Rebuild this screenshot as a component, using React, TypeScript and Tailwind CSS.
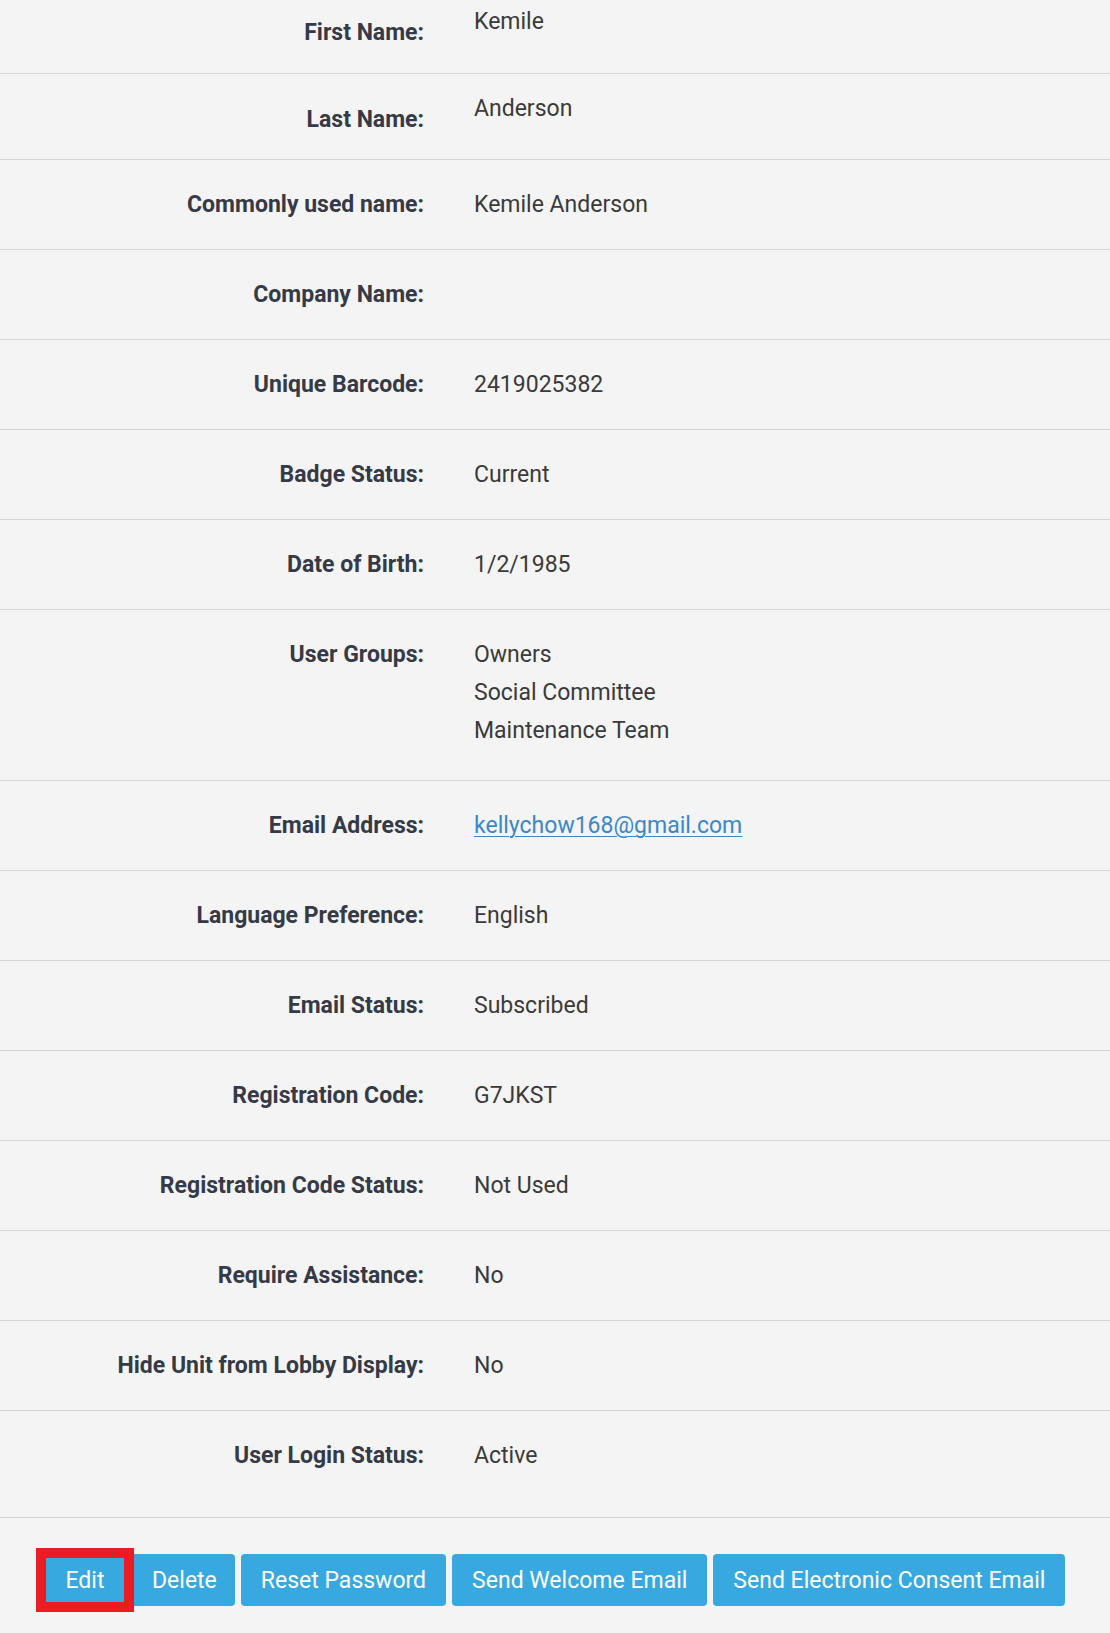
import React from 'react';

type Row = { label: string; value?: React.ReactNode; lines?: string[] };

const rows: Row[] = [
  { label: 'Commonly used name:', value: 'Kemile Anderson' },
  { label: 'Company Name:', value: '' },
  { label: 'Unique Barcode:', value: '2419025382' },
  { label: 'Badge Status:', value: 'Current' },
  { label: 'Date of Birth:', value: '1/2/1985' },
  { label: 'User Groups:', lines: ['Owners', 'Social Committee', 'Maintenance Team'] },
  {
    label: 'Email Address:',
    value: (
      <a href="#" className="text-[#3b87c9] underline underline-offset-[3px] decoration-1">
        kellychow168@gmail.com
      </a>
    ),
  },
  { label: 'Language Preference:', value: 'English' },
  { label: 'Email Status:', value: 'Subscribed' },
  { label: 'Registration Code:', value: 'G7JKST' },
  { label: 'Registration Code Status:', value: 'Not Used' },
  { label: 'Require Assistance:', value: 'No' },
  { label: 'Hide Unit from Lobby Display:', value: 'No' },
];

const buttons = ['Delete', 'Reset Password', 'Send Welcome Email', 'Send Electronic Consent Email'];

function NameRow({ label, value }: { label: string; value: string }) {
  // first two rows: value sits higher than the label
  return (
    <div className="flex h-[86.5px] items-start border-b border-[#d6d6d6]">
      <div className="w-[424px] shrink-0 pt-[30px] text-right font-bold text-[#353a46]">{label}</div>
      <div className="pl-[50px] pt-[19px] text-[#3a3a3a]">{value}</div>
    </div>
  );
}

function DetailRow({ row, last }: { row: Row; last?: boolean }) {
  return (
    <div
      className={`flex items-start border-b border-[#d6d6d6] pt-[29px] ${
        last ? 'pb-[46px]' : row.lines ? 'pb-[34px]' : 'pb-[29px]'
      }`}
    >
      <div className="w-[424px] shrink-0 text-right font-bold text-[#353a46]">{row.label}</div>
      <div className="min-h-[31px] pl-[50px] text-[#3a3a3a]">
        {row.lines ? (
          <div className="flex flex-col gap-[7px]">
            {row.lines.map((l) => (
              <div key={l}>{l}</div>
            ))}
          </div>
        ) : (
          row.value
        )}
      </div>
    </div>
  );
}

export default function App() {
  return (
    <div
      className="min-h-[1633px] w-full overflow-hidden bg-[#f4f4f4] text-[23px] leading-[31px]"
      style={{ fontFamily: 'Roboto, "Liberation Sans", sans-serif' }}
    >
      <div className="-mt-[13px]">
        <NameRow label="First Name:" value="Kemile" />
        <NameRow label="Last Name:" value="Anderson" />
        {rows.map((r) => (
          <DetailRow key={r.label} row={r} />
        ))}
        <DetailRow row={{ label: 'User Login Status:', value: 'Active' }} last />
      </div>

      <div className="flex items-center pl-[36px] pt-[30px]">
        <div className="border-[10px] border-[#ec1c24]">
          <button className="flex h-[44px] w-[78px] items-center justify-center bg-[#38a9e0] text-[23px] text-white">
            Edit
          </button>
        </div>
        <div className="flex items-center gap-[6px]">
          {buttons.map((b, i) => (
            <button
              key={b}
              className={`h-[52px] bg-[#38a9e0] text-[23px] text-white ${
                i === 0 ? 'rounded-r-[4px] px-[18px]' : 'rounded-[4px] px-[20px]'
              }`}
            >
              {b}
            </button>
          ))}
        </div>
      </div>
    </div>
  );
}
